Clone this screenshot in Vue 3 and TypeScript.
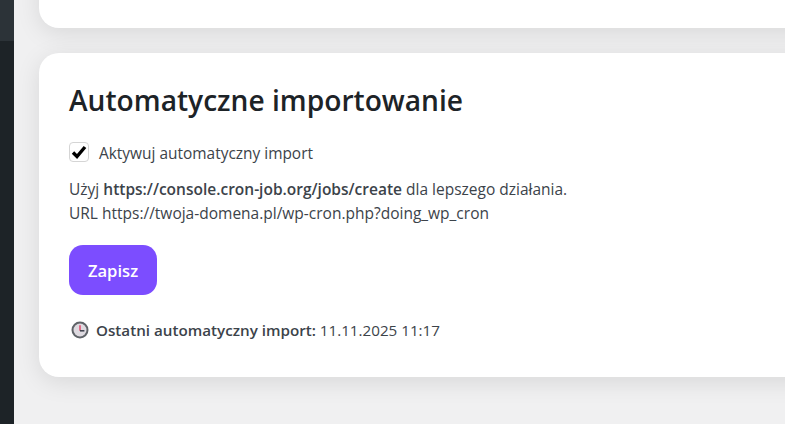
<template>
  <div class="page">
    <aside class="sidebar">
      <div class="sidebar-active"></div>
    </aside>
    <main class="content">
      <section class="card card-previous"></section>
      <section class="card">
        <h2 class="title">Automatyczne importowanie</h2>
        <label class="toggle">
          <span class="checkbox">
            <svg viewBox="0 0 20 20" width="20" height="20">
              <path d="M4 10.5 L8 14.5 L16 5" fill="none" stroke="#000" stroke-width="3.4" />
            </svg>
          </span>
          Aktywuj automatyczny import
        </label>
        <p class="hint">
          Użyj <strong>https://console.cron-job.org/jobs/create</strong> dla lepszego działania.<br />
          URL https://twoja-domena.pl/wp-cron.php?doing_wp_cron
        </p>
        <button class="save" type="button">Zapisz</button>
        <p class="last-run">
          <svg class="clock" viewBox="0 0 18 18" width="18" height="18">
            <circle cx="9" cy="9" r="8.5" fill="#5f6368" />
            <circle cx="9" cy="9" r="6.5" fill="#dedae0" />
            <path d="M9 4.2 V9.8" stroke="#e0476b" stroke-width="1.5" fill="none" />
            <path d="M9 9.8 H13.4" stroke="#3a3f4a" stroke-width="1.5" fill="none" />
          </svg>
          <strong>Ostatni automatyczny import:</strong> 11.11.2025 11:17
        </p>
      </section>
    </main>
  </div>
</template>

<script setup lang="ts">
</script>

<style>
html,
body {
  margin: 0;
  overflow: hidden;
}
</style>

<style scoped>
.page {
  display: flex;
  width: 785px;
  height: 424px;
  overflow: hidden;
  background: #f0f0f1;
  font-family: "Open Sans", "Noto Sans", sans-serif;
  color: #3c434a;
}

.sidebar {
  flex: 0 0 14px;
  background: #1d2327;
}

.sidebar-active {
  height: 41px;
  background: #2c3338;
}

.content {
  flex: 1;
  min-width: 0;
  padding-left: 25px;
}

.card {
  box-sizing: border-box;
  width: 800px;
  height: 324px;
  padding: 29px 30px 30px;
  margin-bottom: 25px;
  background: #fff;
  border-radius: 20px;
  box-shadow: 0 5px 25px rgba(0, 0, 0, 0.1);
}

.card-previous {
  height: 128px;
  margin-top: -100px;
}

.title {
  margin: 0 0 24px;
  font-size: 28.15px;
  line-height: 36px;
  font-weight: 600;
  color: #1d2327;
}

.toggle {
  display: flex;
  align-items: center;
  gap: 10px;
  height: 22px;
  font-size: 15.45px;
}

.checkbox {
  box-sizing: border-box;
  display: flex;
  width: 20px;
  height: 20px;
  margin-top: -2px;
  border: 1px solid #d5d5d5;
  border-radius: 4px;
  background: #fff;
}

.checkbox svg {
  margin: -1px;
}

.hint {
  margin: 13px 0 0;
  font-size: 15.5px;
  line-height: 24px;
}

.hint strong,
.last-run strong {
  font-weight: 600;
}

.save {
  display: block;
  width: 88px;
  height: 50px;
  margin-top: 20px;
  padding: 0;
  border: 0;
  border-radius: 14px;
  background: #7c4dff;
  color: #fff;
  font: 600 16.6px "Open Sans", "Noto Sans", sans-serif;
}

.last-run {
  display: flex;
  align-items: center;
  margin: 24px 0 0;
  height: 22px;
  font-size: 15.2px;
  white-space: pre;
}

.clock {
  margin: 0 7px 0 2px;
}
</style>
